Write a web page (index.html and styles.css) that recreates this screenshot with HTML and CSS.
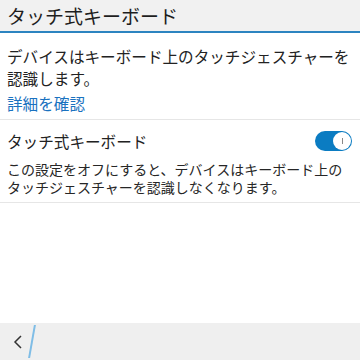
FILE: index.html
```html
<!DOCTYPE html>
<html lang="ja">
<head>
<meta charset="utf-8">
<link rel="stylesheet" href="styles.css">
</head>
<body>
<div class="screen">
  <header class="titlebar"><h1 class="title">タッチ式キーボード</h1></header>
  <main class="content">
    <section class="intro">
      <p class="desc">デバイスはキーボード上のタッチジェスチャーを認識します。</p>
      <a class="link">詳細を確認</a>
    </section>
    <section class="setting">
      <div class="row">
        <span class="label">タッチ式キーボード</span>
        <span class="toggle"><span class="knob"><span class="mark"></span></span></span>
      </div>
      <p class="note">この設定をオフにすると、デバイスはキーボード上のタッチジェスチャーを認識しなくなります。</p>
    </section>
  </main>
  <footer class="actionbar">
    <span class="back">
      <svg width="10" height="14" viewBox="0 0 10 14"><path d="M8 1 L2 7 L8 13" fill="none" stroke="#333" stroke-width="1.5"/></svg>
    </span>
    <span class="divider"></span>
  </footer>
</div>
</body>
</html>
```
FILE: styles.css
```css
* { box-sizing: border-box; margin: 0; padding: 0; }
html, body { width: 360px; height: 360px; overflow: hidden; background: #fff; }
body { font-family: "Noto Sans CJK JP", "Noto Sans", sans-serif; color: #222; }
.screen { display: flex; flex-direction: column; height: 360px; }
.titlebar { height: 33px; background: #f1f1f1; border-bottom: 2px solid #2c84c0; padding-left: 7px; display: flex; align-items: center; }
.title { font-size: 19px; font-weight: 400; line-height: 31px; color: #1e1e1e; }
.content { flex: 1; }
.intro { padding: 12px 7px 5px; border-bottom: 1px solid #e6e6e6; }
.desc { font-size: 15.6px; line-height: 22px; }
.link { display: block; margin-top: 4px; font-size: 15.6px; line-height: 21px; color: #1a72c0; }
.setting { padding: 10px 7px 6px; border-bottom: 1px solid #e6e6e6; }
.row { display: flex; justify-content: space-between; align-items: center; height: 22px; }
.label { font-size: 15.6px; line-height: 22px; }
.toggle { width: 37px; height: 20px; border-radius: 10px; background: #0b7cc2; display: flex; align-items: center; justify-content: flex-end; padding-right: 1px; margin-right: 1px; }
.knob { width: 18px; height: 18px; border-radius: 50%; background: #fff; display: flex; align-items: center; justify-content: center; }
.mark { width: 1px; height: 6px; background: #888; }
.note { font-size: 14px; line-height: 18px; margin-top: 8px; color: #262626; }
.actionbar { height: 37px; background: #efefef; display: flex; align-items: center; padding-left: 13px; gap: 8px; }
.back { display: flex; align-items: center; }
.divider { width: 2px; height: 33px; background: #7fbde6; transform: skewX(-10deg); }
```
